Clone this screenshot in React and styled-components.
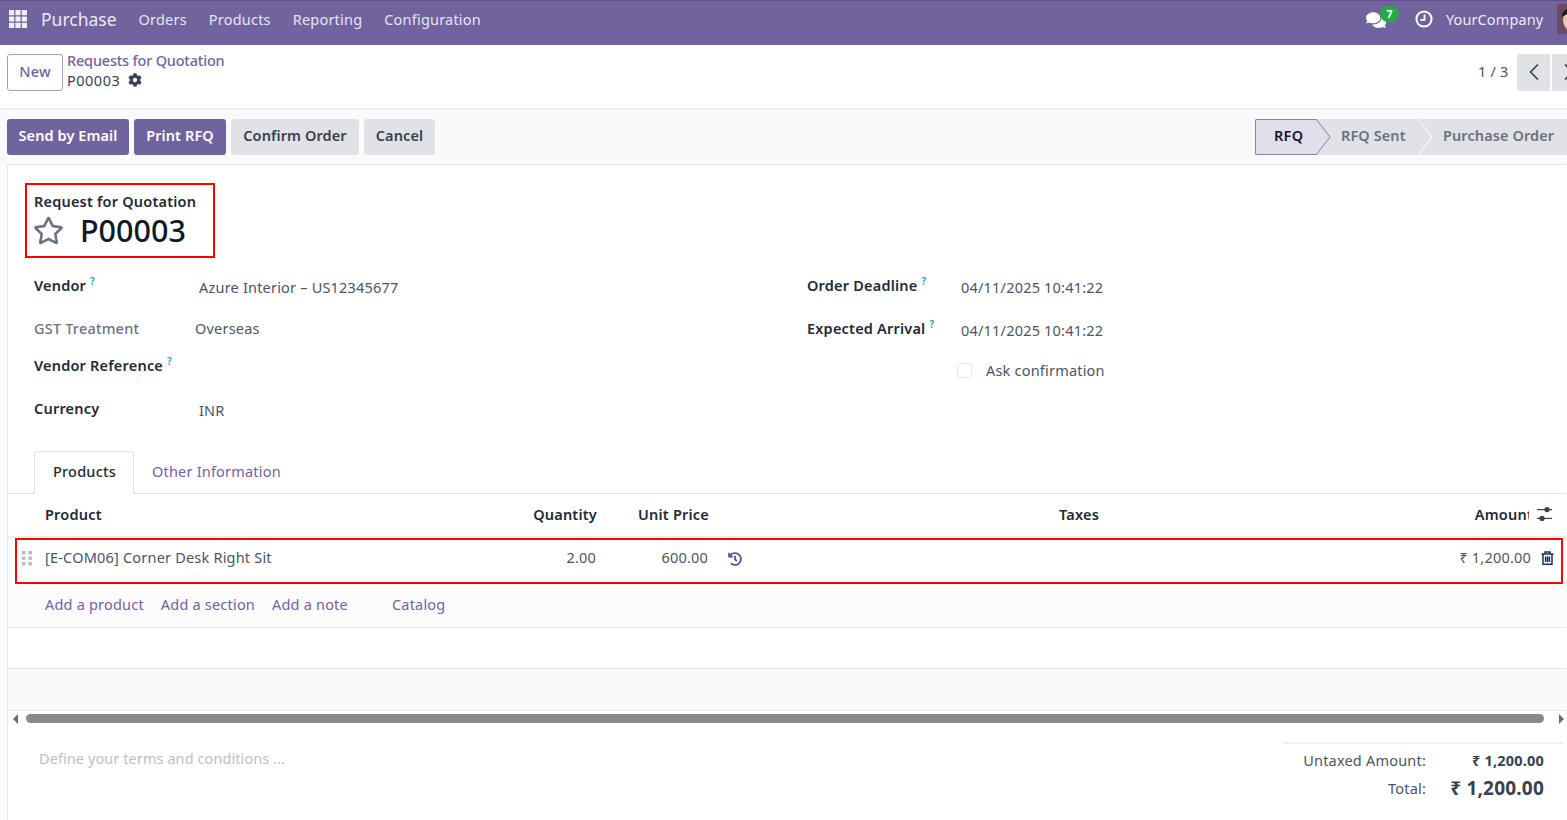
import React from "react";
import styled, { createGlobalStyle } from "styled-components";
import { FaCog, FaComments, FaHistory, FaRegStar } from "react-icons/fa";
import { ChevronLeft, ChevronRight } from "lucide-react";

const Global = createGlobalStyle`
  html, body { margin: 0; padding: 0; height: 820px; overflow: hidden; }
  body {
    background: #f9fafb;
    color: #374151;
    font-family: "Noto Sans", "Open Sans", sans-serif;
    font-size: 14.5px;
    letter-spacing: 0.2px;
  }
  * { box-sizing: border-box; }
  button { font: inherit; letter-spacing: inherit; }
`;

const Page = styled.div`
  width: 1567px;
  height: 820px;
  overflow: hidden;
  display: flex;
  flex-direction: column;
`;

/* top bar */
const Navbar = styled.header`
  height: 45px;
  flex: none;
  background: #71639e;
  border-top: 1px solid #5f5389;
  display: flex;
  align-items: center;
  padding: 0 0 8px 9px;
  color: #fff;
`;
const AppsIcon = styled.svg`
  width: 18px;
  height: 18px;
  fill: #f1eff6;
  margin-right: 14px;
  flex: none;
`;
const Brand = styled.span`
  font-size: 17.5px;
  letter-spacing: 0;
  color: #ece9f3;
  margin-right: 22px;
`;
const NavItem = styled.a`
  color: #e6e3ef;
  margin-right: 22px;
`;
const NavRight = styled.div`
  margin-left: auto;
  display: flex;
  align-items: center;
  width: 201px;
  flex: none;
`;
const ChatWrap = styled.div`
  position: relative;
  width: 20px;
  height: 18px;
  flex: none;
  margin-right: 29px;
  font-size: 20px;
  line-height: 18px;
  color: #fff;
`;
const Badge = styled.span`
  position: absolute;
  top: -4px;
  left: 14px;
  width: 19px;
  height: 16px;
  border-radius: 9px;
  background: #28a745;
  color: #fff;
  font-size: 10.5px;
  font-weight: 700;
  line-height: 16px;
  text-align: center;
`;
const ClockIcon = styled.svg`
  flex: none;
  width: 18px;
  height: 18px;
  margin-right: 13px;
  fill: none;
  stroke: #fff;
  stroke-width: 2;
`;
const Company = styled.span`
  color: #ece9f3;
  margin-right: 13px;
  letter-spacing: 0.1px;
  white-space: nowrap;
  width: 98px;
  flex: none;
`;
const Avatar = styled.svg`
  flex: none;
  width: 30px;
  height: 30px;
  border-radius: 3px;
`;

/* breadcrumb panel */
const ControlPanel = styled.section`
  height: 63px;
  flex: none;
  background: #fff;
  display: flex;
  align-items: flex-start;
  padding: 9px 0 0 7px;
`;
const NewButton = styled.button`
  width: 56px;
  height: 37px;
  margin-right: 4px;
  padding: 0 0 3px;
  background: #fff;
  border: 1px solid #a89cc4;
  border-radius: 3px;
  color: #71639e;
  font-weight: 500;
`;
const Crumbs = styled.div`
  display: flex;
  flex-direction: column;
  gap: 2px;
  line-height: 18px;
  margin-top: -3px;
`;
const CrumbLink = styled.a`
  color: #71639e;
  font-weight: 500;
  letter-spacing: -0.2px;
`;
const CrumbCurrent = styled.div`
  display: flex;
  align-items: center;
  gap: 8px;
  color: #374151;
  letter-spacing: 0.5px;
`;
const Pager = styled.div`
  margin-left: auto;
  display: flex;
  align-items: center;
  height: 37px;
  color: #4b5563;
  width: 89px;
  flex: none;
`;
const PagerText = styled.span`
  margin: 0 10px 3px 0;
  width: 29px;
  flex: none;
  white-space: nowrap;
`;
const PagerButton = styled.button`
  flex: none;
  width: 33px;
  height: 37px;
  margin-right: 2px;
  padding: 0 0 2px;
  border: 0;
  border-radius: ${p => (p.$first ? "3px 0 0 3px" : "0")};
  background: #e0e2e6;
  color: #374151;
  display: flex;
  align-items: center;
  justify-content: center;
`;

/* action bar */
const ActionBar = styled.section`
  height: 56px;
  flex: none;
  border-top: 2px solid #eceef0;
  display: flex;
  align-items: center;
  padding: 0 0 1px 7px;
`;
const ActionButton = styled.button`
  flex: none;
  width: ${p => p.$w}px;
  height: 36px;
  padding: 0 0 3px;
  margin-right: 5px;
  border: 0;
  border-radius: 3px;
  background: ${p => (p.$primary ? "#71639e" : "#e0e2e6")};
  color: ${p => (p.$primary ? "#fff" : "#374151")};
  font-weight: 600;
  letter-spacing: 0.1px;
  white-space: nowrap;
`;
const StatusBar = styled.div`
  margin-left: auto;
  display: flex;
  height: 36px;
  width: 312px;
  flex: none;
`;
const StatusStep = styled.div`
  position: relative;
  height: 36px;
  flex: none;
  width: ${p => p.$w}px;
  padding: 0 0 3px ${p => p.$pad}px;
  display: flex;
  align-items: center;
  background: #e0e2e6;
  color: #6b7280;
  font-weight: 600;
  letter-spacing: 0.1px;
  white-space: nowrap;
  z-index: ${p => p.$z};
`;
const ActiveStep = styled(StatusStep)`
  background: #e2dfec;
  color: #111827;
  letter-spacing: 0.3px;
  border: 1px solid #8b7fb0;
  border-right: 0;
  border-radius: 2px 0 0 2px;
`;
const Arrow = styled.svg`
  position: absolute;
  top: ${p => p.$top || 0}px;
  right: -14px;
  width: 15px;
  height: 36px;
`;

/* form sheet */
const Sheet = styled.main`
  flex: 1;
  width: 1559px;
  margin-left: 7px;
  background: #fff;
  border-left: 1px solid #e5e7eb;
  border-top: 1px solid #e5e7eb;
  padding-top: 18px;
  display: flex;
  flex-direction: column;
`;
const TitleBox = styled.div`
  width: 190px;
  height: 75px;
  margin-left: 17px;
  border: 2px solid #f00;
  padding: 7px 0 0 7px;
`;
const TitleLabel = styled.div`
  font-weight: 600;
  color: #1f2937;
  line-height: 19px;
`;
const TitleRow = styled.div`
  display: flex;
  align-items: center;
`;
const Star = styled(FaRegStar)`
  font-size: 31px;
  color: #6b7280;
  margin: 0 16px 0 -1px;
  flex: none;
`;
const TitleName = styled.h1`
  margin: 0;
  font-size: 30.5px;
  letter-spacing: 0;
  line-height: 38px;
  font-weight: 500;
  color: #111827;
`;
const Fields = styled.div`
  display: flex;
  padding-left: 26px;
  margin-top: 17px;
  height: 176px;
`;
const FieldCol = styled.div`
  width: ${p => p.$w}px;
  flex: none;
`;
const FieldRow = styled.div`
  height: ${p => p.$h}px;
  display: flex;
  align-items: flex-start;
`;
const Label = styled.label`
  width: ${p => p.$w || 165}px;
  flex: none;
  line-height: 20px;
  font-weight: ${p => (p.$muted ? 500 : 600)};
  color: ${p => (p.$muted ? "#6b7280" : "#1f2937")};
  white-space: nowrap;
`;
const Help = styled.sup`
  color: #17a2b8;
  font-size: 10px;
  font-weight: 600;
  margin-left: 4px;
  line-height: 0;
`;
const Value = styled.span`
  line-height: 20px;
  color: #4b5563;
  padding-top: ${p => p.$top ?? 2}px;
  white-space: nowrap;
`;
const Check = styled.span`
  width: 15px;
  height: 15px;
  border: 1px solid #e5e7eb;
  border-radius: 3px;
  background: #fff;
  margin: 3px 14px 0 0;
  flex: none;
`;
const CheckRow = styled.div`
  display: flex;
  align-items: flex-start;
  margin-left: 150px;
  line-height: 20px;
  color: #4b5563;
`;
const Tabs = styled.nav`
  height: 43px;
  flex: none;
  display: flex;
  padding-left: 26px;
  border-bottom: 1px solid #dee2e6;
`;
const Tab = styled.a`
  height: 43px;
  display: flex;
  align-items: center;
  padding: 0 18px ${p => (p.$active ? 4 : 3)}px;
  color: ${p => (p.$active ? "#1f2937" : "#71639e")};
  font-weight: ${p => (p.$active ? 500 : 400)};
  ${p => p.$active && "background: #fff; border: 1px solid #dee2e6; border-bottom: 0; border-radius: 3px 3px 0 0; width: 100px;"}
`;

/* lines table */
const GridRow = styled.div`
  display: grid;
  grid-template-columns: 477px 112px 112px 390px 430px 1fr;
  align-items: center;
`;
const HeadRow = styled(GridRow)`
  height: 44px;
  flex: none;
  border-bottom: 2px solid #eceef0;
  font-weight: 600;
  color: #1f2937;
  padding: 0 14px 2px 0;
`;
const Cell = styled.div`
  text-align: ${p => (p.$left ? "left" : "right")};
  padding-left: ${p => p.$pad || 0}px;
  white-space: nowrap;
  overflow: hidden;
`;
const ClippedTitle = styled.span`
  display: inline-block;
  margin-right: -4px;
`;
const OptionalIcon = styled.svg`
  display: block;
  width: 16px;
  height: 14px;
  margin-left: 8px;
  fill: #374151;
`;
const LineRow = styled(GridRow)`
  height: 46px;
  flex: none;
  margin: 0 3px 0 7px;
  padding-bottom: 9px;
  border: 2px solid #f00;
  grid-template-columns: 468px 111px 112px 390px 433px 1fr;
  color: #4b5563;
`;
const DragHandle = styled.svg`
  position: absolute;
  left: 5px;
  top: 4px;
  width: 10px;
  height: 15px;
  fill: #b4bac4;
`;
const ProductCell = styled(Cell)`
  position: relative;
  text-align: left;
  padding-left: 28px;
  overflow: visible;
`;
const HistoryCell = styled(Cell)`
  text-align: left;
  padding: 4px 0 0 20px;
  color: #5b4f8f;
  font-size: 14px;
  line-height: 0;
`;
const TrashIcon = styled.svg`
  display: block;
  width: 13px;
  height: 14px;
  margin: 3px 0 0 10px;
  fill: none;
  stroke: #1c3554;
  stroke-width: 1.5;
`;
const AddRow = styled.div`
  height: 44px;
  flex: none;
  display: flex;
  align-items: center;
  padding: 0 0 3px 37px;
  background: #fcfcfd;
  border-bottom: 1px solid #e5e7eb;
`;
const AddLink = styled.a`
  color: #71639e;
  margin-right: ${p => p.$gap}px;
  white-space: nowrap;
`;
const EmptyRow = styled.div`
  height: ${p => p.$h}px;
  flex: none;
  background: ${p => (p.$alt ? "#fafafa" : "#fff")};
  border-bottom: 1px solid #e5e7eb;
`;
const ScrollBar = styled.div`
  height: 15px;
  flex: none;
  display: flex;
  align-items: center;
  padding-left: 5px;
  background: #fff;
`;
const ScrollArrow = styled.span`
  width: 0;
  height: 0;
  flex: none;
  border-top: 5px solid transparent;
  border-bottom: 5px solid transparent;
  ${p => (p.$right ? "border-left: 5px solid #6b6b6b;" : "border-right: 5px solid #6b6b6b;")}
`;
const ScrollThumb = styled.div`
  flex: none;
  width: 1518px;
  height: 9px;
  margin: 0 15px 0 8px;
  border-radius: 5px;
  background: #8a8a8a;
`;

/* footer */
const Footer = styled.div`
  flex: 1;
  display: flex;
  justify-content: space-between;
  padding: 16px 3px 0 31px;
`;
const Terms = styled.div`
  color: #bcc0c6;
  margin-top: 6px;
  line-height: 20px;
  letter-spacing: 0.08px;
`;
const Totals = styled.div`
  width: 279px;
  border-top: 2px solid #eceef0;
  padding: 3px 19px 0 0;
`;
const TotalRow = styled.div`
  display: grid;
  grid-template-columns: 142px 1fr;
  align-items: center;
  height: ${p => p.$h}px;
  color: #4b5563;
`;
const TotalLabel = styled.span`
  text-align: right;
`;
const TotalValue = styled.strong`
  text-align: right;
  font-size: ${p => p.$size}px;
  font-weight: 700;
  color: #374151;
`;

export default function App() {
  const squares = [];
  for (let r = 0; r < 3; r++) for (let c = 0; c < 3; c++) squares.push([c * 6.4, r * 6.4]);
  const dots = [];
  for (let r = 0; r < 3; r++) for (let c = 0; c < 2; c++) dots.push([c * 6.5, r * 5.5]);

  return (
    <Page>
      <Global />
      <Navbar>
        <AppsIcon viewBox="0 0 18 18">
          {squares.map(([x, y]) => <rect key={x + "-" + y} x={x} y={y} width="5.2" height="5.2" rx="0.5" />)}
        </AppsIcon>
        <Brand>Purchase</Brand>
        <NavItem>Orders</NavItem>
        <NavItem>Products</NavItem>
        <NavItem>Reporting</NavItem>
        <NavItem>Configuration</NavItem>
        <NavRight>
          <ChatWrap>
            <FaComments />
            <Badge>7</Badge>
          </ChatWrap>
          <ClockIcon viewBox="0 0 18 18">
            <circle cx="9" cy="9" r="7.6" />
            <path d="M9.5 4.5 V9.8 H5.2" strokeWidth="1.8" />
          </ClockIcon>
          <Company>YourCompany</Company>
          <Avatar viewBox="0 0 30 30">
            <rect width="30" height="30" fill="#6d4a63" />
            <ellipse cx="15" cy="16" rx="9" ry="11" fill="#e9c7ae" />
            <path d="M5 13 C4 1 26 1 25 12 C20 8 11 8 5 13 Z" fill="#1f1917" />
            <circle cx="11" cy="15" r="1.2" fill="#222" />
            <circle cx="19" cy="15" r="1.2" fill="#222" />
          </Avatar>
        </NavRight>
      </Navbar>

      <ControlPanel>
        <NewButton>New</NewButton>
        <Crumbs>
          <CrumbLink>Requests for Quotation</CrumbLink>
          <CrumbCurrent>P00003 <FaCog size={14} color="#374151" /></CrumbCurrent>
        </Crumbs>
        <Pager>
          <PagerText>1 / 3</PagerText>
          <PagerButton $first><ChevronLeft size={28} strokeWidth={1.5} /></PagerButton>
          <PagerButton><ChevronRight size={28} strokeWidth={1.5} /></PagerButton>
        </Pager>
      </ControlPanel>

      <ActionBar>
        <ActionButton $primary $w={122}>Send by Email</ActionButton>
        <ActionButton $primary $w={92}>Print RFQ</ActionButton>
        <ActionButton $w={128}>Confirm Order</ActionButton>
        <ActionButton $w={71}>Cancel</ActionButton>
        <StatusBar>
          <ActiveStep $w={62} $pad={18} $z={3}>
            RFQ
            <Arrow $top={-1} viewBox="0 0 15 36">
              <path d="M0 0 L14 18 L0 36 Z" fill="#e2dfec" />
              <path d="M0 0 L14 18 L0 36" fill="none" stroke="#8b7fb0" />
            </Arrow>
          </ActiveStep>
          <StatusStep $w={102} $pad={24} $z={2}>
            RFQ Sent
            <Arrow viewBox="0 0 15 36">
              <path d="M0 0 L14 18 L0 36 Z" fill="#e0e2e6" />
              <path d="M0 0 L14 18 L0 36" fill="none" stroke="#fff" />
            </Arrow>
          </StatusStep>
          <StatusStep $w={148} $pad={24} $z={1}>Purchase Order</StatusStep>
        </StatusBar>
      </ActionBar>

      <Sheet>
        <TitleBox>
          <TitleLabel>Request for Quotation</TitleLabel>
          <TitleRow>
            <Star />
            <TitleName>P00003</TitleName>
          </TitleRow>
        </TitleBox>

        <Fields>
          <FieldCol $w={773}>
            <FieldRow $h={43}>
              <Label>Vendor<Help>?</Help></Label>
              <Value>Azure Interior – US12345677</Value>
            </FieldRow>
            <FieldRow $h={37}>
              <Label $muted $w={161}>GST Treatment</Label>
              <Value $top={0}>Overseas</Value>
            </FieldRow>
            <FieldRow $h={43}>
              <Label>Vendor Reference<Help>?</Help></Label>
            </FieldRow>
            <FieldRow $h={40}>
              <Label>Currency</Label>
              <Value>INR</Value>
            </FieldRow>
          </FieldCol>
          <FieldCol $w={500}>
            <FieldRow $h={43}>
              <Label $w={154}>Order Deadline<Help>?</Help></Label>
              <Value>04/11/2025 10:41:22</Value>
            </FieldRow>
            <FieldRow $h={42}>
              <Label $w={154}>Expected Arrival<Help>?</Help></Label>
              <Value>04/11/2025 10:41:22</Value>
            </FieldRow>
            <CheckRow><Check />Ask confirmation</CheckRow>
          </FieldCol>
        </Fields>

        <Tabs>
          <Tab $active>Products</Tab>
          <Tab>Other Information</Tab>
        </Tabs>

        <HeadRow>
          <Cell $left $pad={37}>Product</Cell>
          <Cell>Quantity</Cell>
          <Cell>Unit Price</Cell>
          <Cell>Taxes</Cell>
          <Cell><ClippedTitle>Amount</ClippedTitle></Cell>
          <Cell $left>
            <OptionalIcon viewBox="0 0 16 14">
              <rect x="0" y="2" width="16" height="1.2" />
              <rect x="0" y="10.8" width="16" height="1.2" />
              <circle cx="10" cy="2.6" r="2.6" />
              <circle cx="5" cy="11.4" r="2.6" />
            </OptionalIcon>
          </Cell>
        </HeadRow>
        <LineRow>
          <ProductCell>
            <DragHandle viewBox="0 0 10 15">
              {dots.map(([x, y]) => <rect key={x + "-" + y} x={x} y={y} width="3.4" height="3.4" />)}
            </DragHandle>
            [E-COM06] Corner Desk Right Sit
          </ProductCell>
          <Cell>2.00</Cell>
          <Cell>600.00</Cell>
          <HistoryCell><FaHistory /></HistoryCell>
          <Cell>₹ 1,200.00</Cell>
          <Cell $left>
            <TrashIcon viewBox="0 0 13 14">
              <path d="M0.5 3 H12.5 M4 3 V1 H9 V3 M2 3 V13.2 H11 V3 M4.6 5.5 V11 M6.5 5.5 V11 M8.4 5.5 V11" />
            </TrashIcon>
          </Cell>
        </LineRow>
        <AddRow>
          <AddLink $gap={17}>Add a product</AddLink>
          <AddLink $gap={17}>Add a section</AddLink>
          <AddLink $gap={44}>Add a note</AddLink>
          <AddLink $gap={0}>Catalog</AddLink>
        </AddRow>
        <EmptyRow $h={41} />
        <EmptyRow $h={42} $alt />
        <ScrollBar>
          <ScrollArrow />
          <ScrollThumb />
          <ScrollArrow $right />
        </ScrollBar>

        <Footer>
          <Terms>Define your terms and conditions ...</Terms>
          <Totals>
            <TotalRow $h={26}>
              <TotalLabel>Untaxed Amount:</TotalLabel>
              <TotalValue $size={14.5}>₹ 1,200.00</TotalValue>
            </TotalRow>
            <TotalRow $h={30}>
              <TotalLabel>Total:</TotalLabel>
              <TotalValue $size={19}>₹ 1,200.00</TotalValue>
            </TotalRow>
          </Totals>
        </Footer>
      </Sheet>
    </Page>
  );
}
